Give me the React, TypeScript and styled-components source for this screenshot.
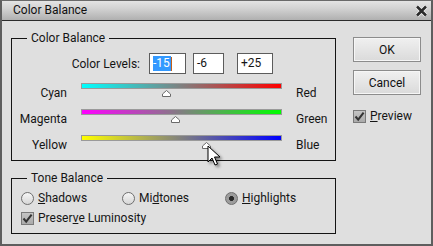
import React from 'react'
import styled, { createGlobalStyle } from 'styled-components'

const Global = createGlobalStyle`
  html, body {
    margin: 0;
    padding: 0;
    width: 433px;
    height: 246px;
    overflow: hidden;
    font-family: Roboto, 'Liberation Sans', sans-serif;
    font-size: 12px;
    color: #151515;
  }
`

const Frame = styled.div`
  box-sizing: border-box;
  width: 433px;
  height: 246px;
  display: flex;
  flex-direction: column;
  background: #dfdfdf;
  border: 2px solid #5e5e5e;
  border-top: 1px solid #6a6a6a;
  position: relative;
`

const TitleBar = styled.div`
  height: 19px;
  flex: none;
  display: flex;
  align-items: center;
  justify-content: space-between;
  padding: 0 3px 0 11px;
  background: linear-gradient(to bottom, #e4e4e4 0%, #d2d2d2 40%, #b0b0b0 100%);
  border-bottom: 1px solid #2c2c2c;
  color: #111;
`

const TitleText = styled.span`
  font-size: 12px;
  line-height: 19px;
`

const Body = styled.div`
  display: flex;
  padding: 10px 0 0 9px;
  gap: 17px;
`

const LeftCol = styled.div`
  width: 325px;
  display: flex;
  flex-direction: column;
  gap: 10px;
`

const Group = styled.fieldset`
  margin: 0;
  padding: 0;
  min-width: 0;
  border: 1px solid #141414;
`

const Legend = styled.legend`
  margin-left: 15px;
  padding: 0 4px;
  line-height: 14px;
  font-size: 12px;
`

const GroupInner = styled.div<{ $pad: string }>`
  padding: ${p => p.$pad};
`

const LevelsRow = styled.div`
  display: flex;
  align-items: center;
  height: 21px;
`

const LevelsLabel = styled.span`
  width: 128px;
  text-align: right;
  margin-right: 9px;
`

const LevelBox = styled.div<{ $w: number; $mr: number }>`
  box-sizing: border-box;
  width: ${p => p.$w}px;
  height: 21px;
  margin-right: ${p => p.$mr}px;
  border: 1px solid #5c5c5c;
  background: #fff;
  display: flex;
  align-items: center;
  padding-left: 3px;
  line-height: 15px;
`

const Selected = styled.span`
  background: #3399ff;
  color: #fff;
  padding-right: 1px;
`

const Caret = styled.span`
  width: 1px;
  height: 14px;
  background: #c2601a;
`

const SliderGrid = styled.div`
  margin-top: 6px;
  display: grid;
  grid-template-columns: 55px 201px auto;
  grid-auto-rows: 26px;
  column-gap: 14px;
`

const SideLabel = styled.span<{ $right?: boolean }>`
  align-self: center;
  text-align: ${p => (p.$right ? 'left' : 'right')};
  line-height: 14px;
`

const TrackCell = styled.div`
  position: relative;
  padding-top: 3px;
`

const Track = styled.div<{ $from: string; $to: string }>`
  box-sizing: border-box;
  height: 6px;
  border: 1px solid #9a9a9a;
  background: linear-gradient(to right, ${p => p.$from}, ${p => p.$to});
`

const Thumb = styled.svg`
  position: absolute;
  top: 10px;
  width: 9px;
  height: 7px;
  margin-left: -4px;
`

const OptionsRow = styled.div`
  display: grid;
  grid-template-columns: 101px 103px auto;
  height: 14px;
  align-items: center;
`

const CheckRow = styled.div`
  display: flex;
  height: 14px;
  align-items: center;
  margin-top: 6px;
`

const Option = styled.label`
  display: flex;
  align-items: center;
  gap: 4px;
  line-height: 14px;
  white-space: nowrap;
`

const RadioDot = styled.span<{ $on?: boolean }>`
  box-sizing: border-box;
  width: 13px;
  height: 13px;
  border-radius: 50%;
  border: 1px solid #6e6e6e;
  background: ${p =>
    p.$on
      ? 'radial-gradient(circle, #2a2a2a 0 2.2px, #9c9c9c 2.6px 100%)'
      : 'linear-gradient(to bottom, #f6f6f6, #d6d6d6)'};
  flex: none;
`

const CheckBox = styled.span`
  box-sizing: border-box;
  width: 13px;
  height: 13px;
  border: 1px solid #7a7a7a;
  background: linear-gradient(to bottom, #c4c4c4, #aaaaaa);
  display: flex;
  align-items: center;
  justify-content: center;
  flex: none;
`

const RightCol = styled.div`
  width: 68px;
  padding-top: 6px;
  display: flex;
  flex-direction: column;
  gap: 8px;
`

const Button = styled.button`
  box-sizing: border-box;
  width: 68px;
  height: 25px;
  padding: 0;
  font-family: inherit;
  font-size: 12px;
  color: #111;
  border: 1px solid #8c8c8c;
  box-shadow: inset 0 0 0 1px #f6f6f6;
  background: linear-gradient(to bottom, #f0f0f0, #dadada);
`

const PreviewRow = styled.div`
  margin-top: 6px;
  height: 14px;
  display: flex;
  align-items: center;
`

const Cursor = styled.svg`
  position: absolute;
  left: 205px;
  top: 144px;
  width: 16px;
  height: 24px;
  filter: drop-shadow(2px 2px 1.5px rgba(0, 0, 0, 0.45));
`

const Check = () => (
  <svg width="11" height="11" viewBox="0 0 11 11">
    <path d="M1.5 5.5 L4.2 8.6 L9.6 1.6" fill="none" stroke="#333" strokeWidth="2" />
  </svg>
)

const sliders = [
  { left: 'Cyan', right: 'Red', from: '#00ffff', to: '#ff0000', value: -15 },
  { left: 'Magenta', right: 'Green', from: '#ff00ff', to: '#00ff00', value: -6 },
  { left: 'Yellow', right: 'Blue', from: '#ffff00', to: '#0000ff', value: 25 },
]

export default function App() {
  return (
    <>
      <Global />
      <Frame>
        <TitleBar>
          <TitleText>Color Balance</TitleText>
          <svg width="13" height="12" viewBox="0 0 13 12">
            <path d="M2 1.5 L11 10.5 M11 1.5 L2 10.5" stroke="#f4f4f4" strokeWidth="4.2" />
            <path d="M2 1.5 L11 10.5 M11 1.5 L2 10.5" stroke="#2b2b2b" strokeWidth="2.6" />
          </svg>
        </TitleBar>
        <Body>
          <LeftCol>
            <Group>
              <Legend>Color Balance</Legend>
              <GroupInner $pad="8px 0 2px 0">
                <LevelsRow>
                  <LevelsLabel>Color Levels:</LevelsLabel>
                  <LevelBox $w={37} $mr={7}>
                    <Selected>-15</Selected>
                    <Caret />
                  </LevelBox>
                  <LevelBox $w={31} $mr={13}>-6</LevelBox>
                  <LevelBox $w={36} $mr={0}>+25</LevelBox>
                </LevelsRow>
                <SliderGrid>
                  {sliders.map(s => (
                    <React.Fragment key={s.left}>
                      <SideLabel>{s.left}</SideLabel>
                      <TrackCell>
                        <Track $from={s.from} $to={s.to} />
                        <Thumb viewBox="0 0 9 7" style={{ left: `${100 + s.value}px` }}>
                          <path d="M4.5 0.5 L8.5 4 L8.5 6.5 L0.5 6.5 L0.5 4 Z" fill="#fff" stroke="#6a6a6a" />
                        </Thumb>
                      </TrackCell>
                      <SideLabel $right>{s.right}</SideLabel>
                    </React.Fragment>
                  ))}
                </SliderGrid>
              </GroupInner>
            </Group>
            <Group>
              <Legend>Tone Balance</Legend>
              <GroupInner $pad="6px 0 8px 9px">
                <OptionsRow>
                  <Option>
                    <RadioDot />
                    <span><u>S</u>hadows</span>
                  </Option>
                  <Option>
                    <RadioDot />
                    <span>Mi<u>d</u>tones</span>
                  </Option>
                  <Option>
                    <RadioDot $on />
                    <span><u>H</u>ighlights</span>
                  </Option>
                </OptionsRow>
                <CheckRow>
                  <Option>
                    <CheckBox><Check /></CheckBox>
                    <span>Preser<u>v</u>e Luminosity</span>
                  </Option>
                </CheckRow>
              </GroupInner>
            </Group>
          </LeftCol>
          <RightCol>
            <Button>OK</Button>
            <Button>Cancel</Button>
            <PreviewRow>
              <Option>
                <CheckBox><Check /></CheckBox>
                <span><u>P</u>review</span>
              </Option>
            </PreviewRow>
          </RightCol>
        </Body>
        <Cursor viewBox="0 0 16 24">
          <path d="M1 1 L1 17 L5 13 L8 20 L10.5 19 L7.5 12 L13 12 Z" fill="#fff" stroke="#000" strokeWidth="1" strokeLinejoin="round" />
        </Cursor>
      </Frame>
    </>
  )
}
